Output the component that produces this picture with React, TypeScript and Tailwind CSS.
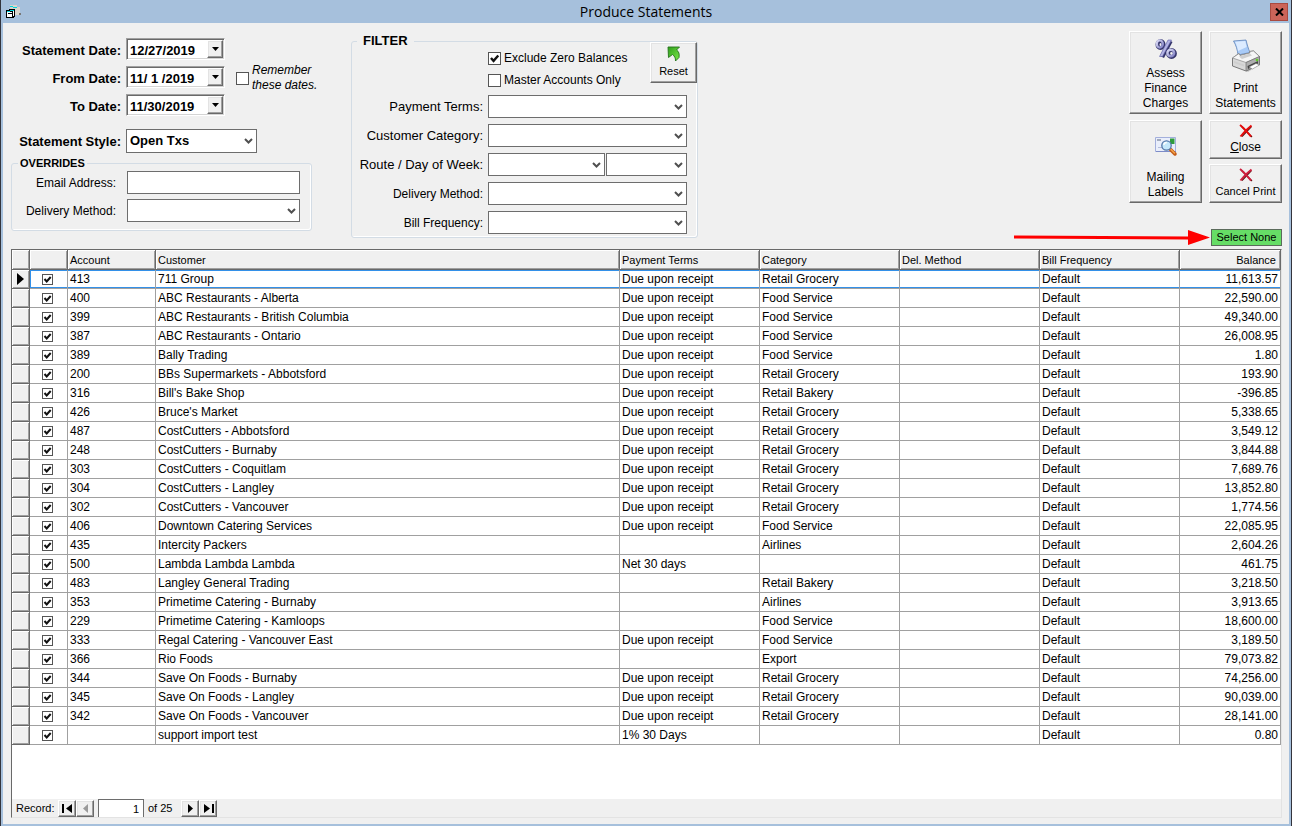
import React, { useState } from 'react';

type Row = [account: string, customer: string, terms: string, category: string, balance: string];

const DUE = 'Due upon receipt';

const ROWS: Row[] = [
  ['413', '711 Group', DUE, 'Retail Grocery', '11,613.57'],
  ['400', 'ABC Restaurants - Alberta', DUE, 'Food Service', '22,590.00'],
  ['399', 'ABC Restaurants - British Columbia', DUE, 'Food Service', '49,340.00'],
  ['387', 'ABC Restaurants - Ontario', DUE, 'Food Service', '26,008.95'],
  ['389', 'Bally Trading', DUE, 'Food Service', '1.80'],
  ['200', 'BBs Supermarkets - Abbotsford', DUE, 'Retail Grocery', '193.90'],
  ['316', "Bill's Bake Shop", DUE, 'Retail Bakery', '-396.85'],
  ['426', "Bruce's Market", DUE, 'Retail Grocery', '5,338.65'],
  ['487', 'CostCutters - Abbotsford', DUE, 'Retail Grocery', '3,549.12'],
  ['248', 'CostCutters - Burnaby', DUE, 'Retail Grocery', '3,844.88'],
  ['303', 'CostCutters - Coquitlam', DUE, 'Retail Grocery', '7,689.76'],
  ['304', 'CostCutters - Langley', DUE, 'Retail Grocery', '13,852.80'],
  ['302', 'CostCutters - Vancouver', DUE, 'Retail Grocery', '1,774.56'],
  ['406', 'Downtown Catering Services', DUE, 'Food Service', '22,085.95'],
  ['435', 'Intercity Packers', '', 'Airlines', '2,604.26'],
  ['500', 'Lambda Lambda Lambda', 'Net 30 days', '', '461.75'],
  ['483', 'Langley General Trading', '', 'Retail Bakery', '3,218.50'],
  ['353', 'Primetime Catering - Burnaby', '', 'Airlines', '3,913.65'],
  ['229', 'Primetime Catering - Kamloops', '', 'Food Service', '18,600.00'],
  ['333', 'Regal Catering - Vancouver East', DUE, 'Food Service', '3,189.50'],
  ['366', 'Rio Foods', '', 'Export', '79,073.82'],
  ['344', 'Save On Foods - Burnaby', DUE, 'Retail Grocery', '74,256.00'],
  ['345', 'Save On Foods - Langley', DUE, 'Retail Grocery', '90,039.00'],
  ['342', 'Save On Foods - Vancouver', DUE, 'Retail Grocery', '28,141.00'],
  ['', 'support import test', '1% 30 Days', '', '0.80'],
];

const RAISED = 'border border-t-white border-l-white border-r-[#696969] border-b-[#696969] shadow-[inset_-1px_-1px_0_#a0a0a0,inset_1px_1px_0_#e3e3e3] bg-[#f0f0f0]';

/* ---------- icons ---------- */

const WindowIcon = () => (
  <svg width="16" height="14" viewBox="0 0 16 14" aria-hidden="true" shapeRendering="crispEdges">
    <path d="M4 0h7v2h3v8H9V4H4z" fill="#d8d4cc" />
    <path d="M4 1h3v1H4zM7 2h4v1H7z" fill="#00d8e0" />
    <path d="M13 8h2v2h-2z" fill="#777" />
    <path d="M0 5h3V4h6v8H8v1H0z" fill="#000" />
    <path d="M1 7h5v5H1z" fill="#fff" />
    <path d="M4 5h4v1H4zM1 6h3v1H1z" fill="#00d8e0" />
    <path d="M7 6h1v5H7z" fill="#fff" />
    <path d="M2 8h5v1H2z" fill="#000" />
  </svg>
);

const PercentIcon = () => (
  <svg width="24" height="22" viewBox="0 0 24 22" aria-hidden="true">
    <defs>
      <linearGradient id="pct" x1="0" y1="0" x2="1" y2="1">
        <stop offset="0" stopColor="#dcdcf6" />
        <stop offset="1" stopColor="#8080c4" />
      </linearGradient>
    </defs>
    <g stroke="#34346a" fill="none">
      <ellipse cx="6.500" cy="6.500" rx="3" ry="3.600" strokeWidth="4" />
      <ellipse cx="17.500" cy="15.500" rx="3.400" ry="3.400" strokeWidth="4" />
      <path d="M16.500 3L8 19" strokeWidth="4.500" />
    </g>
    <g stroke="url(#pct)" fill="none">
      <ellipse cx="5.800" cy="6" rx="3" ry="3.600" strokeWidth="2.400" />
      <ellipse cx="16.800" cy="15" rx="3.400" ry="3.200" strokeWidth="2.400" />
    </g>
    <path d="M14 2h3.500L8.500 18.500H5.500z" fill="#b3b3e4" stroke="#6060a8" strokeWidth=".6" />
  </svg>
);

const PrinterIcon = () => (
  <svg width="30" height="34" viewBox="0 0 30 34" aria-hidden="true">
    <path d="M3 27l14 6 11-7-4-3z" fill="#b5b5b5" opacity=".7" />
    <path d="M2.500 2L15 1c1 4 2 8 4 12.500L7 16C6.500 11 5 6 2.500 2z" fill="#a9cbf7" stroke="#5f83b8" strokeWidth=".8" />
    <path d="M4 2.700L14.300 2c.5 2 .8 4 1.400 6L7 12C6.500 8.500 5.500 5.500 4 2.700z" fill="#dcebff" />
    <path d="M1.500 19L8 14.500l1 2 10-2.500-.5-1.500 4-.5 6 5.500v8L15 32 1.500 27z" fill="#d9d9d9" stroke="#6d6d6d" strokeWidth=".9" />
    <path d="M1.500 19L8 14.500l1 2 10-2.500-.5-1.500 4-.5 6 5.500L15 23.500z" fill="#f6f6f6" stroke="#8a8a8a" strokeWidth=".7" />
    <path d="M15 23.500V32l13.500-6.500v-8z" fill="#aeaeae" stroke="#6d6d6d" strokeWidth=".7" />
    <path d="M3 22l10 3.500v2L3 24zM8 17.500l11-3 2 2-10 3.500z" fill="#cfcfcf" />
    <path d="M16.500 27l10.500-5v2.500L17 30z" fill="#444" />
    <path d="M18 28l7-3.500 3.500 1.500-7 4z" fill="#fff" stroke="#777" strokeWidth=".5" />
    <circle cx="26" cy="21" r="1.300" fill="#5fce28" />
  </svg>
);

const MailingIcon = () => (
  <svg width="24" height="22" viewBox="0 0 24 22" aria-hidden="true">
    <path d="M1.500 2.500h20v14h-20z" fill="#e9eefb" stroke="#a3afdc" />
    <path d="M2 16h20v1H2z" fill="#7d8cc8" />
    <path d="M3 4h4v2H3z" fill="#a2aabc" />
    <path d="M16 3.500h4.500V9H16z" fill="#2f9c3d" />
    <path d="M4 12h4v1H4z" fill="#b3bddb" />
    <path d="M16.500 14.500l4.500 4.500" stroke="#c35c19" strokeWidth="3.500" strokeLinecap="round" />
    <path d="M17 14.500l3.500 3.500" stroke="#f5a54a" strokeWidth="1.500" strokeLinecap="round" />
    <circle cx="12.500" cy="10.500" r="4.700" fill="#c4e8fb" stroke="#5276a8" strokeWidth="1.300" />
    <path d="M9.800 10a3 3 0 013-2.500" fill="none" stroke="#fff" strokeWidth="1.300" />
  </svg>
);

const CrossIcon = ({ color }: { color: string }) => (
  <svg width="14" height="14" viewBox="0 0 14 14" aria-hidden="true" fill="none">
    <path d="M2 2l11 11M12.500 2.500L3 12.500" stroke="#5a1010" strokeWidth="1.200" />
    <path d="M1 1c4 3 7 7 11 11.500M12.500 1.500C8 5 5 8 1.500 12.500" stroke={color} strokeWidth="2" />
  </svg>
);

const ResetIcon = () => (
  <svg width="14" height="16" viewBox="0 0 14 16" aria-hidden="true">
    <defs>
      <linearGradient id="green" x1="0" y1="0" x2="1" y2="1">
        <stop offset="0" stopColor="#2f9e1b" />
        <stop offset="1" stopColor="#7bea4a" />
      </linearGradient>
    </defs>
    <path d="M1 1h11.500L9.500 4c2.500 1.500 3 4 2.500 7.500L8.500 15c.2-3-1-5-3-6.500L1.500 11.500z" fill="url(#green)" stroke="#23731a" strokeWidth=".9" />
  </svg>
);

const Chevron = () => (
  <svg className="pointer-events-none absolute right-1 top-1/2 -translate-y-1/2" width="9" height="7" viewBox="0 0 9 7" aria-hidden="true">
    <path d="M1 1.500L4.500 5 8 1.500" fill="none" stroke="#505050" strokeWidth="2" />
  </svg>
);

/* ---------- controls ---------- */

const Combo = ({ id, label, className, options = [''] }: { id: string; label?: string; className: string; options?: string[] }) => (
  <span className={`relative block ${className}`}>
    <select id={id} aria-label={label} className="block h-full w-full appearance-none border border-[#6d6d6d] bg-white pl-[3px] outline-none">
      {options.map((o) => (
        <option key={o}>{o}</option>
      ))}
    </select>
    <Chevron />
  </span>
);

const Check = ({ size, ...props }: { size: string } & Omit<React.InputHTMLAttributes<HTMLInputElement>, 'size'>) => (
  <span className="inline-grid shrink-0 align-top">
    <input type="checkbox" className={`peer col-start-1 row-start-1 appearance-none border border-[#555] bg-white ${size}`} {...props} />
    <svg className={`pointer-events-none invisible col-start-1 row-start-1 peer-checked:visible ${size}`} viewBox="0 0 11 11" aria-hidden="true">
      <path d="M2.500 5L4.700 7.500 8.700 3" fill="none" stroke="#111" strokeWidth="2" />
    </svg>
  </span>
);

const DateField = ({ id, label, value }: { id: string; label: string; value: string }) => (
  <div className="flex h-[22px] items-center gap-[5px]">
    <label htmlFor={id} className="w-[110px] pt-[3px] text-right">{label}</label>
    <div className="flex h-full w-[99px] border border-t-[#a0a0a0] border-r-white border-b-white border-l-[#a0a0a0] bg-white shadow-[inset_1px_1px_0_#696969,inset_-1px_-1px_0_#d4d4d4]">
      <input id={id} defaultValue={value} className="min-w-0 flex-1 bg-transparent pt-[3px] pl-[3px] outline-none" />
      <button type="button" aria-label={`Pick ${label}`} className={`m-px flex w-4 items-center justify-center ${RAISED}`}>
        <svg width="7" height="4" viewBox="0 0 7 4" aria-hidden="true"><path d="M0 0h7L3.500 4z" /></svg>
      </button>
    </div>
  </div>
);

const FilterRow = ({ id, label, size, children }: { id: string; label: string; size: string; children?: React.ReactNode }) => (
  <div className="flex h-[23px] items-center gap-[5px]">
    <label htmlFor={id} className={`flex-1 text-right ${size}`}>{label}</label>
    <div className="flex h-full w-[199px] gap-px">{children ?? <Combo id={id} className="flex-1" />}</div>
  </div>
);

const NavButton = ({ label, d, disabled }: { label: string; d: string; disabled?: boolean }) => (
  <button type="button" aria-label={label} disabled={disabled} className={`flex h-[17px] w-[18px] items-center justify-center text-black disabled:text-[#9a9a9a] ${RAISED}`}>
    <svg width="11" height="9" viewBox="0 0 11 9" aria-hidden="true"><path d={d} fill="currentColor" /></svg>
  </button>
);

const TH = 'border-r border-b border-[#696969] bg-[#f0f0f0] pt-px pl-[2px] text-left text-[11px] font-normal shadow-[inset_1px_1px_0_#fff,inset_-1px_-1px_0_#a0a0a0]';
const TD = 'border-r border-b border-[#a0a0a0] whitespace-nowrap';

export default function App() {
  const [selected, setSelected] = useState<boolean[]>(ROWS.map(() => true));

  const toggle = (i: number) => setSelected((s) => s.map((v, n) => (n === i ? !v : v)));

  return (
    <div className="flex min-h-screen flex-col border-x border-[#33343c] bg-[#f0f0f0] font-['Liberation_Sans',Arial,sans-serif] text-[12px] text-black">
      {/* Title bar */}
      <header className="flex h-[23px] shrink-0 items-center bg-[#a6c0dc] pr-[3px] pl-[5px]">
        <div className="w-4"><WindowIcon /></div>
        <h1 className="flex-1 text-center font-['Open_Sans','Noto_Sans',sans-serif] text-[14px] leading-5">Produce Statements</h1>
        <button type="button" aria-label="Close window" className="flex h-[18px] w-[18px] items-center justify-center border border-[#a94a41] bg-[#cc6459]">
          <svg width="9" height="8" viewBox="0 0 9 8" aria-hidden="true"><path d="M1 .5l7 7M8 .5l-7 7" stroke="#000" strokeWidth="2" /></svg>
        </button>
      </header>

      <main className="flex flex-1 flex-col border-x-2 border-b-2 border-[#a6c0dc] pr-[7px] pb-[6px] pl-2">
        <div className="flex">
          {/* Dates and overrides */}
          <div className="w-[301px] shrink-0 pt-[15px]">
            <div className="flex items-center text-[13px] font-bold">
              <div className="flex flex-col gap-[6px]">
                <DateField id="statement-date" label="Statement Date:" value="12/27/2019" />
                <DateField id="from-date" label="From Date:" value="11/ 1 /2019" />
                <DateField id="to-date" label="To Date:" value="11/30/2019" />
              </div>
              <label className="ml-[11px] flex items-center gap-[3px] pt-[2px] text-[12px] leading-[15px] font-normal whitespace-nowrap italic">
                <Check size="size-[13px]" />
                <span>Remember<br />these dates.</span>
              </label>
            </div>

            <div className="mt-[13px] flex items-center gap-[5px] text-[13px] font-bold">
              <label htmlFor="style" className="w-[110px] pt-px text-right whitespace-nowrap">Statement Style:</label>
              <Combo id="style" className="h-6 w-[131px]" options={['Open Txs']} />
            </div>

            <fieldset className="mt-[2px] rounded-[3px] border border-[#d3dce5] pb-2 shadow-[inset_-1px_-1px_0_#fff]">
              <legend className="ml-[6px] px-[2px] text-[11px] leading-4 font-bold">OVERRIDES</legend>
              <div className="flex flex-col gap-[5px]">
                <div className="flex items-center gap-[11px]">
                  <label htmlFor="email" className="w-[104px] text-right">Email Address:</label>
                  <input id="email" className="h-[23px] w-[173px] border border-[#6d6d6d] bg-white outline-none" />
                </div>
                <div className="flex items-center gap-[11px]">
                  <label htmlFor="override-method" className="w-[104px] text-right">Delivery Method:</label>
                  <Combo id="override-method" className="h-[23px] w-[173px]" />
                </div>
              </div>
            </fieldset>
          </div>

          {/* Filter */}
          <div className="ml-[39px] w-[347px] shrink-0 pt-[10px]">
            <fieldset className="rounded-[3px] border border-[#d3dce5] pb-[3px] shadow-[inset_-1px_-1px_0_#fff]">
              <legend className="ml-[5px] px-[6px] text-[13px] leading-4 font-bold">FILTER</legend>
              <div className="-mt-[7px] flex justify-between pl-[136px]">
                <div className="pt-[5px]">
                  <label className="flex h-[22px] items-center gap-[3px]">
                    <Check size="size-[13px]" defaultChecked />
                    Exclude Zero Balances
                  </label>
                  <label className="flex h-[22px] items-center gap-[3px]">
                    <Check size="size-[13px]" />
                    Master Accounts Only
                  </label>
                </div>
                <button type="button" className={`flex h-[41px] w-[47px] flex-col items-center justify-center gap-px text-[11px] ${RAISED}`}>
                  <ResetIcon />
                  Reset
                </button>
              </div>
              <div className="mt-1 flex flex-col gap-[6px] pr-[10px]">
                <FilterRow id="terms" label="Payment Terms:" size="text-[13px]" />
                <FilterRow id="category" label="Customer Category:" size="text-[13px]" />
                <FilterRow id="route" label="Route / Day of Week:" size="text-[13px]">
                  <Combo id="route" className="w-[117px]" />
                  <Combo id="day" label="Day of week" className="flex-1" />
                </FilterRow>
                <FilterRow id="method" label="Delivery Method:" size="text-[12px]" />
                <FilterRow id="frequency" label="Bill Frequency:" size="text-[12px]" />
              </div>
            </fieldset>
          </div>

          {/* Actions */}
          <div className="ml-auto flex flex-col items-end gap-[26px] pt-2 pb-[3px]">
            <div className="flex gap-[7px] leading-[15px]">
              <div className="flex flex-col gap-[6px]">
                <button type="button" className={`flex h-[83px] w-[73px] flex-col items-center justify-between pt-[6px] pb-[2px] ${RAISED}`}>
                  <PercentIcon />
                  <span>Assess<br />Finance<br />Charges</span>
                </button>
                <button type="button" className={`flex h-[83px] w-[73px] flex-col items-center justify-between pt-[14px] pb-[2px] ${RAISED}`}>
                  <MailingIcon />
                  <span>Mailing<br />Labels</span>
                </button>
              </div>
              <div className="flex flex-col">
                <button type="button" className={`flex h-[83px] w-[73px] flex-col items-center justify-between pt-[7px] pb-[2px] ${RAISED}`}>
                  <PrinterIcon />
                  <span>Print<br />Statements</span>
                </button>
                <button type="button" className={`mt-[6px] flex h-[39px] w-[73px] flex-col items-center justify-center gap-[2px] ${RAISED}`}>
                  <CrossIcon color="#e60b0b" />
                  <span><u>C</u>lose</span>
                </button>
                <button type="button" className={`mt-[5px] flex h-[39px] w-[73px] flex-col items-center justify-center gap-[2px] text-[11px] ${RAISED}`}>
                  <CrossIcon color="#cf1f3e" />
                  Cancel Print
                </button>
              </div>
            </div>
            <div className="flex items-center gap-px">
              <svg width="196" height="16" viewBox="0 0 196 16" aria-hidden="true">
                <path d="M0 5.500l174 1V0l22 7.500L174 15V9.500L0 8.500z" fill="#f00" />
              </svg>
              <button
                type="button"
                onClick={() => setSelected(ROWS.map(() => false))}
                className="h-[17px] w-[71px] border border-[#5b6b5b] bg-[#66dd66] text-[11px] leading-[15px]"
              >
                Select None
              </button>
            </div>
          </div>
        </div>

        {/* Customer grid */}
        <section className="flex flex-1 flex-col border border-t-[#696969] border-r-[#e3e3e3] border-b-[#e3e3e3] border-l-[#696969] bg-white">
          <table className="w-full table-fixed border-separate border-spacing-0 leading-[18px]">
            <colgroup>
              <col className="w-[18px]" />
              <col className="w-[38px]" />
              <col className="w-[88px]" />
              <col />
              <col className="w-[140px]" />
              <col className="w-[140px]" />
              <col className="w-[140px]" />
              <col className="w-[140px]" />
              <col className="w-[101px]" />
            </colgroup>
            <thead>
              <tr className="h-5">
                <th className={TH} aria-label="Current record" />
                <th className={TH} aria-label="Selected" />
                <th className={TH}>Account</th>
                <th className={TH}>Customer</th>
                <th className={TH}>Payment Terms</th>
                <th className={TH}>Category</th>
                <th className={TH}>Del. Method</th>
                <th className={TH}>Bill Frequency</th>
                <th className={`${TH} pr-1`}><div className="text-right">Balance</div></th>
              </tr>
            </thead>
            <tbody>
              {ROWS.map(([account, customer, terms, category, balance], i) => {
                const td = i === 0 ? `${TD} pl-[2px] shadow-[inset_0_1px_0_#3390e8,inset_0_-1px_0_#3390e8]` : `${TD} pl-[2px]`;
                return (
                  <tr key={customer} className="h-[19px]">
                    <td className="border-r border-b border-[#696969] bg-[#f0f0f0] shadow-[inset_1px_1px_0_#fff,inset_-1px_-1px_0_#a0a0a0]">
                      {i === 0 && (
                        <svg className="mx-auto" width="7" height="12" viewBox="0 0 7 12" aria-hidden="true"><path d="M0 0l7 6-7 6z" /></svg>
                      )}
                    </td>
                    <td className={i === 0 ? `${TD} pt-px pr-[2px] text-center leading-none shadow-[inset_1px_1px_0_#3390e8,inset_0_-1px_0_#3390e8]` : `${TD} pt-px pr-[2px] text-center leading-none`}>
                      <Check size="size-[11px]" aria-label={`Select ${customer}`} checked={selected[i]} onChange={() => toggle(i)} />
                    </td>
                    <td className={td}>{account}</td>
                    <td className={td}>{customer}</td>
                    <td className={td}>{terms}</td>
                    <td className={td}>{category}</td>
                    <td className={td} />
                    <td className={td}>Default</td>
                    <td className={`${td} pr-[2px] text-right`}>{balance}</td>
                  </tr>
                );
              })}
            </tbody>
          </table>

          {/* Record navigator */}
          <nav aria-label="Records" className="mt-auto flex h-[18px] items-center bg-[#f0f0f0] pl-1 text-[11px]">
            <label htmlFor="record" className="w-[42px]">Record:</label>
            <NavButton label="First record" d="M0 0h2v9H0zM10 0v9L4 4.500z" />
            <NavButton label="Previous record" d="M8 0v9L3 4.500z" disabled />
            <input id="record" defaultValue="1" className="ml-1 h-[18px] w-[46px] border border-b-0 border-[#6d6d6d] bg-white pr-1 text-right outline-none" />
            <span className="w-[37px] pl-1">of {ROWS.length}</span>
            <NavButton label="Next record" d="M3 0l5 4.500L3 9z" />
            <NavButton label="Last record" d="M1 0l6 4.500L1 9zM9 0h2v9H9z" />
          </nav>
        </section>
      </main>
    </div>
  );
}
